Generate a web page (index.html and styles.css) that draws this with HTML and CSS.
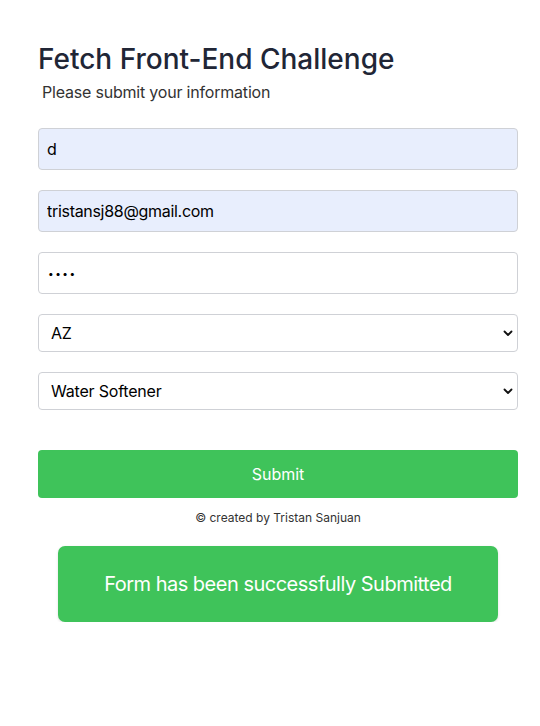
FILE: index.html
```html
<!DOCTYPE html>
<html>
<head>
<meta charset="utf-8">
<link rel="stylesheet" href="styles.css">
</head>
<body>
<main class="page">
  <h1 class="title">Fetch Front-End Challenge</h1>
  <p class="subtitle">Please submit your information</p>
  <form class="form">
    <input class="field autofill" type="text" value="d">
    <input class="field autofill" type="email" value="tristansj88@gmail.com">
    <input class="field password" type="password" value="abcd">
    <div class="select-wrap">
      <select class="select"><option>AZ</option></select>
      <svg class="chev" width="10" height="7" viewBox="0 0 10 7"><path d="M1.5 1.5 L5 5 L8.5 1.5" fill="none" stroke="#111" stroke-width="1.8" stroke-linecap="round" stroke-linejoin="round"/></svg>
    </div>
    <div class="select-wrap">
      <select class="select"><option>Water Softener</option></select>
      <svg class="chev" width="10" height="7" viewBox="0 0 10 7"><path d="M1.5 1.5 L5 5 L8.5 1.5" fill="none" stroke="#111" stroke-width="1.8" stroke-linecap="round" stroke-linejoin="round"/></svg>
    </div>
    <button class="submit" type="button">Submit</button>
  </form>
  <p class="credit">© created by Tristan Sanjuan</p>
  <div class="success">Form has been successfully Submitted</div>
</main>
</body>
</html>
```
FILE: styles.css
```css
* { box-sizing: border-box; }
body {
  margin: 0;
  background: #fff;
  font-family: Inter, "Noto Sans", sans-serif;
  color: #212529;
}
.page {
  width: 480px;
  margin: 0 38px;
  padding-top: 40px;
}
.title {
  margin: 0;
  font-size: 28px;
  font-weight: 500;
  line-height: 38px;
  color: #212636;
}
.subtitle {
  margin: 4px 0 0 4px;
  font-size: 16px;
  line-height: 20px;
  color: #333;
  letter-spacing: -0.2px;
}
.form {
  display: flex;
  flex-direction: column;
  margin-top: 26px;
}
.field {
  height: 42px;
  margin-bottom: 20px;
  border: 1px solid #cfd1d6;
  border-radius: 4px;
  padding: 0 8px;
  font-family: Inter, "Noto Sans", sans-serif;
  font-size: 16px;
  letter-spacing: -0.3px;
  color: #000;
  background: #fff;
  outline: none;
}
.field.autofill { background: #e8eefd; }
.field.password {
  font-size: 10px;
  letter-spacing: 1.5px;
  padding-left: 9px;
}
.select-wrap {
  position: relative;
  height: 38px;
  margin-bottom: 20px;
}
.select {
  width: 100%;
  height: 38px;
  border: 1px solid #cfd1d6;
  border-radius: 4px;
  padding: 0 12px;
  font-family: Inter, "Noto Sans", sans-serif;
  font-size: 16px;
  letter-spacing: -0.2px;
  color: #000;
  background: #fff;
  appearance: none;
  -webkit-appearance: none;
}
.chev {
  position: absolute;
  right: 5px;
  top: 16px;
}
.submit {
  margin-top: 20px;
  height: 48px;
  border: none;
  border-radius: 4px;
  background: #3fc35a;
  color: #fff;
  font-family: Inter, "Noto Sans", sans-serif;
  font-size: 16px;
}
.credit {
  margin: 12px 0 0;
  text-align: center;
  font-size: 12px;
  line-height: 16px;
  color: #333;
}
.success {
  margin: 20px 20px 0;
  height: 76px;
  display: flex;
  align-items: center;
  justify-content: center;
  background: #3fc35a;
  border-radius: 7px;
  color: #fff;
  font-size: 20px;
  letter-spacing: -0.5px;
  box-shadow: 0 1px 3px rgba(0,0,0,0.12);
}
```
